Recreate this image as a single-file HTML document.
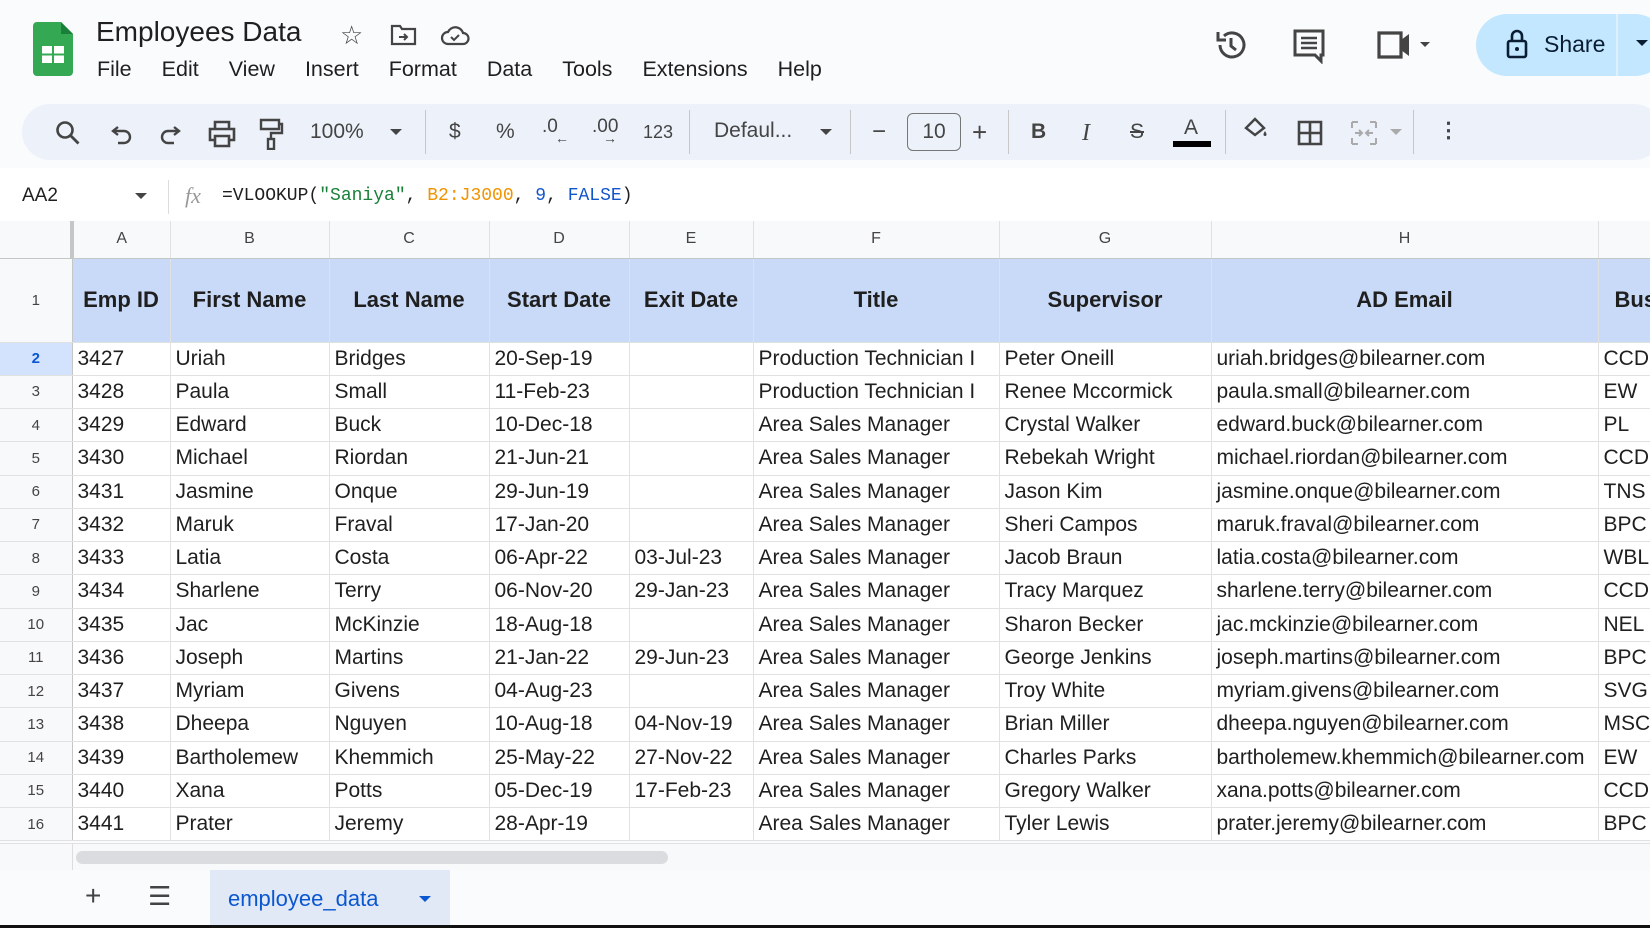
<!DOCTYPE html>
<html><head><meta charset="utf-8"><style>
*{box-sizing:border-box;margin:0;padding:0}
body{width:1650px;height:928px;overflow:hidden;background:#f9fbfd;font-family:"Liberation Sans",Arial,sans-serif;color:#1f1f1f;position:relative}
.abs{position:absolute}
.menu span{margin-right:30px}
.tb{position:absolute;top:104px;left:22px;width:1640px;height:56px;background:#edf2fa;border-radius:28px}
table{border-collapse:collapse;position:absolute;left:0;top:221px;table-layout:fixed;background:#fff;width:1700px}
td{border-right:1px solid #e1e1e1;border-bottom:1px solid #e1e1e1;font-size:21px;white-space:nowrap;overflow:hidden;padding-left:5px;height:33.25px}
td.rn{background:#f8f9fa;color:#444;font-size:15px;text-align:center;padding:0;border-right:1px solid #c4c7c5}
tr.ch td{background:#f8f9fa;color:#444;font-size:16px;text-align:center;height:37px;padding:0;border-bottom:1px solid #c4c7c5}
tr.h td{background:#c9daf8;font-weight:bold;text-align:center;height:84px;font-size:22px;padding:0}
tr.h td.rn{background:#f8f9fa;font-weight:normal;font-size:15px}
</style></head><body>
<svg class="abs" style="left:33px;top:22px" width="40" height="54" viewBox="0 0 40 54"><path d="M4 0h24l12 12v38a4 4 0 0 1-4 4H4a4 4 0 0 1-4-4V4a4 4 0 0 1 4-4z" fill="#34a853"/><path d="M28 0v12h12z" fill="#188038"/><rect x="9" y="24" width="22" height="17" fill="#fff"/><rect x="19" y="24" width="2" height="17" fill="#34a853"/><rect x="9" y="31.5" width="22" height="2" fill="#34a853"/></svg>
<div class="abs" style="left:96px;top:16px;font-size:28px">Employees Data</div>
<div class="abs" style="left:340px;top:20px;font-size:26px;color:#444">☆</div>
<svg class="abs" style="left:390px;top:24px" width="27" height="22" viewBox="0 0 27 22"><path d="M2 2h8l2 3h13v15H2z" fill="none" stroke="#444" stroke-width="2.2"/><path d="M9 13h8m-3-3 3 3-3 3" stroke="#444" stroke-width="2" fill="none"/></svg>
<svg class="abs" style="left:440px;top:24px" width="30" height="22" viewBox="0 0 30 22"><path d="M8 20a6 6 0 0 1 0-12 8 8 0 0 1 15 1 5.5 5.5 0 0 1 0 11z" fill="none" stroke="#444" stroke-width="2.2"/><path d="M11 13l3 3 5-5" stroke="#444" stroke-width="2" fill="none"/></svg>
<div class="abs menu" style="left:97px;top:57px;font-size:21.5px"><span>File</span><span>Edit</span><span>View</span><span>Insert</span><span>Format</span><span>Data</span><span>Tools</span><span>Extensions</span><span>Help</span></div>
<svg class="abs" style="left:1214px;top:28px" width="34" height="34" viewBox="0 0 34 34"><path d="M6 17a12 12 0 1 0 4-9" fill="none" stroke="#444" stroke-width="3"/><path d="M4 4v8h8" fill="none" stroke="#444" stroke-width="3"/><path d="M17 10v8l5 4" fill="none" stroke="#444" stroke-width="3"/></svg>
<svg class="abs" style="left:1292px;top:28px" width="34" height="36" viewBox="0 0 34 36"><path d="M3 3h28v24h-2v6l-6-6H3z" fill="none" stroke="#444" stroke-width="3"/><path d="M9 10h16M9 15h16M9 20h16" stroke="#444" stroke-width="2.5"/></svg>
<svg class="abs" style="left:1376px;top:30px" width="56" height="30" viewBox="0 0 56 30"><path d="M3 3h22v24H3z" fill="none" stroke="#444" stroke-width="3.2"/><path d="M25 10l8-6v22l-8-6z" fill="#444"/><path d="M44 12h10l-5 5z" fill="#444"/></svg>
<div class="abs" style="left:1476px;top:14px;width:190px;height:62px;background:#c2e7ff;border-radius:31px"></div>
<div class="abs" style="left:1616px;top:14px;width:2px;height:62px;background:#e0f0fb"></div>
<svg class="abs" style="left:1505px;top:28px" width="24" height="32" viewBox="0 0 24 32"><rect x="3" y="13" width="18" height="16" rx="2" fill="none" stroke="#0b1d33" stroke-width="2.6"/><path d="M7 13V8a5 5 0 0 1 10 0v5" fill="none" stroke="#0b1d33" stroke-width="2.6"/><circle cx="12" cy="21" r="2" fill="#0b1d33"/></svg>
<div class="abs" style="left:1544px;top:31px;font-size:23px;color:#0b1d33">Share</div>
<div class="abs" style="left:1636px;top:40px;border:6px solid transparent;border-top-color:#0b1d33"></div>
<div class="tb"></div>
<div class="abs" style="left:0;top:118px;width:1650px;height:30px;font-size:21px;color:#444">
<svg class="abs" style="left:55px;top:2px" width="26" height="26" viewBox="0 0 26 26"><circle cx="10" cy="10" r="7.5" fill="none" stroke="#444" stroke-width="2.6"/><path d="M15.5 15.5l8 8" stroke="#444" stroke-width="2.8"/></svg>
<svg class="abs" style="left:110px;top:4px" width="24" height="24" viewBox="0 0 24 24"><path d="M8 5L3 9l5 4" fill="none" stroke="#444" stroke-width="2.4"/><path d="M3 9h11a6 6 0 0 1 0 12H8" fill="none" stroke="#444" stroke-width="2.4"/></svg>
<svg class="abs" style="left:158px;top:4px" width="24" height="24" viewBox="0 0 24 24"><path d="M16 5l5 4-5 4" fill="none" stroke="#444" stroke-width="2.4"/><path d="M21 9H10a6 6 0 0 0 0 12h6" fill="none" stroke="#444" stroke-width="2.4"/></svg>
<svg class="abs" style="left:208px;top:2px" width="28" height="28" viewBox="0 0 28 28"><path d="M7 9V2h14v7M7 20H2V9h24v11h-5" fill="none" stroke="#444" stroke-width="2.6"/><path d="M7 16h14v10H7z" fill="none" stroke="#444" stroke-width="2.6"/></svg>
<svg class="abs" style="left:258px;top:0" width="26" height="32" viewBox="0 0 26 32"><path d="M3 2h18v9H3zM21 6h3v9H13v6" fill="none" stroke="#444" stroke-width="2.4"/><rect x="10" y="21" width="6" height="10" fill="none" stroke="#444" stroke-width="2.4"/></svg>
<span class="abs" style="left:310px;top:2px">100%</span>
<div class="abs" style="left:390px;top:11px;border:6px solid transparent;border-top-color:#444"></div>
<div class="abs" style="left:425px;top:-8px;width:1px;height:44px;background:#c7c7c7"></div>
<span class="abs" style="left:449px;top:2px">$</span>
<span class="abs" style="left:496px;top:2px">%</span>
<span class="abs" style="left:542px;top:-2px;font-size:19px">.0</span><span class="abs" style="left:555px;top:12px;font-size:14px">←</span>
<span class="abs" style="left:592px;top:-2px;font-size:19px">.00</span><span class="abs" style="left:603px;top:12px;font-size:14px">→</span>
<span class="abs" style="left:643px;top:4px;font-size:18px">123</span>
<div class="abs" style="left:689px;top:-8px;width:1px;height:44px;background:#c7c7c7"></div>
<span class="abs" style="left:714px;top:1px">Defaul...</span>
<div class="abs" style="left:820px;top:11px;border:6px solid transparent;border-top-color:#444"></div>
<div class="abs" style="left:850px;top:-8px;width:1px;height:44px;background:#c7c7c7"></div>
<span class="abs" style="left:872px;top:0;font-size:24px">−</span>
<div class="abs" style="left:907px;top:-5px;width:54px;height:38px;border:1.5px solid #747775;border-radius:6px;text-align:center;line-height:35px">10</div>
<span class="abs" style="left:972px;top:-1px;font-size:26px">+</span>
<div class="abs" style="left:1008px;top:-8px;width:1px;height:44px;background:#c7c7c7"></div>
<span class="abs" style="left:1031px;top:2px;font-weight:bold">B</span>
<span class="abs" style="left:1082px;top:2px;font-style:italic;font-family:'Liberation Serif',serif;font-size:24px">I</span>
<span class="abs" style="left:1130px;top:2px;text-decoration:line-through">S</span>
<span class="abs" style="left:1184px;top:-2px">A</span>
<div class="abs" style="left:1173px;top:23px;width:38px;height:6px;background:#000"></div>
<div class="abs" style="left:1225px;top:-8px;width:1px;height:44px;background:#c7c7c7"></div>
<svg class="abs" style="left:1242px;top:-4px" width="28" height="28" viewBox="0 0 28 28"><path d="M4 14l9-9 9 9-9 7z" fill="none" stroke="#444" stroke-width="2.4"/><path d="M23 17c2 3 2 5 0 5s-2-2 0-5z" fill="#444"/></svg>
<svg class="abs" style="left:1297px;top:2px" width="26" height="26" viewBox="0 0 26 26"><path d="M2 2h22v22H2zM13 2v22M2 13h22" fill="none" stroke="#444" stroke-width="2.6"/></svg>
<svg class="abs" style="left:1350px;top:2px" width="28" height="26" viewBox="0 0 28 26"><path d="M2 2h6M2 2v6M26 2h-6M26 2v6M2 24h6M2 24v-6M26 24h-6M26 24v-6M5 13h7m-3-3 3 3-3 3M23 13h-7m3-3-3 3 3 3" fill="none" stroke="#aaa" stroke-width="2"/></svg>
<div class="abs" style="left:1390px;top:11px;border:6px solid transparent;border-top-color:#aaa"></div>
<div class="abs" style="left:1413px;top:-8px;width:1px;height:44px;background:#c7c7c7"></div>
<span class="abs" style="left:1438px;top:0;font-weight:bold">⋮</span>
</div>
<div class="abs" style="left:0;top:168px;width:1650px;height:53px;background:#fff"></div>
<div class="abs" style="left:22px;top:185px;font-size:19px">AA2</div>
<div class="abs" style="left:135px;top:193px;border:6px solid transparent;border-top-color:#444"></div>
<div class="abs" style="left:168px;top:180px;width:1px;height:34px;background:#ddd"></div>
<div class="abs" style="left:185px;top:183px;font-size:22px;font-style:italic;font-family:'Liberation Serif',serif;color:#999">fx</div>
<div class="abs" style="left:222px;top:186px;font-family:'Liberation Mono',monospace;font-size:18px">=VLOOKUP(<span style="color:#188038">"Saniya"</span>, <span style="color:#f09300">B2:J3000</span>, <span style="color:#1155cc">9</span>, <span style="color:#1155cc">FALSE</span>)</div>
<table>
<colgroup><col style="width:72px"><col style="width:98px"><col style="width:159px"><col style="width:160px"><col style="width:140px"><col style="width:124px"><col style="width:246px"><col style="width:212px"><col style="width:387px"><col style="width:102px"></colgroup>
<tr class="ch"><td class="rn" style="border-right:4px solid #c4c7c5"></td><td>A</td><td>B</td><td>C</td><td>D</td><td>E</td><td>F</td><td>G</td><td>H</td><td></td></tr>
<tr class="h"><td class="rn">1</td><td>Emp ID</td><td>First Name</td><td>Last Name</td><td>Start Date</td><td>Exit Date</td><td>Title</td><td>Supervisor</td><td>AD Email</td><td style="text-align:left;padding-left:16px">Bus</td></tr>
<tr><td class="rn" style="background:#d3e3fd;color:#0b57d0;font-weight:bold">2</td><td>3427</td><td>Uriah</td><td>Bridges</td><td>20-Sep-19</td><td></td><td>Production Technician I</td><td>Peter Oneill</td><td>uriah.bridges@bilearner.com</td><td>CCDR</td></tr>
<tr><td class="rn">3</td><td>3428</td><td>Paula</td><td>Small</td><td>11-Feb-23</td><td></td><td>Production Technician I</td><td>Renee Mccormick</td><td>paula.small@bilearner.com</td><td>EW</td></tr>
<tr><td class="rn">4</td><td>3429</td><td>Edward</td><td>Buck</td><td>10-Dec-18</td><td></td><td>Area Sales Manager</td><td>Crystal Walker</td><td>edward.buck@bilearner.com</td><td>PL</td></tr>
<tr><td class="rn">5</td><td>3430</td><td>Michael</td><td>Riordan</td><td>21-Jun-21</td><td></td><td>Area Sales Manager</td><td>Rebekah Wright</td><td>michael.riordan@bilearner.com</td><td>CCDR</td></tr>
<tr><td class="rn">6</td><td>3431</td><td>Jasmine</td><td>Onque</td><td>29-Jun-19</td><td></td><td>Area Sales Manager</td><td>Jason Kim</td><td>jasmine.onque@bilearner.com</td><td>TNS</td></tr>
<tr><td class="rn">7</td><td>3432</td><td>Maruk</td><td>Fraval</td><td>17-Jan-20</td><td></td><td>Area Sales Manager</td><td>Sheri Campos</td><td>maruk.fraval@bilearner.com</td><td>BPC</td></tr>
<tr><td class="rn">8</td><td>3433</td><td>Latia</td><td>Costa</td><td>06-Apr-22</td><td>03-Jul-23</td><td>Area Sales Manager</td><td>Jacob Braun</td><td>latia.costa@bilearner.com</td><td>WBL</td></tr>
<tr><td class="rn">9</td><td>3434</td><td>Sharlene</td><td>Terry</td><td>06-Nov-20</td><td>29-Jan-23</td><td>Area Sales Manager</td><td>Tracy Marquez</td><td>sharlene.terry@bilearner.com</td><td>CCDR</td></tr>
<tr><td class="rn">10</td><td>3435</td><td>Jac</td><td>McKinzie</td><td>18-Aug-18</td><td></td><td>Area Sales Manager</td><td>Sharon Becker</td><td>jac.mckinzie@bilearner.com</td><td>NEL</td></tr>
<tr><td class="rn">11</td><td>3436</td><td>Joseph</td><td>Martins</td><td>21-Jan-22</td><td>29-Jun-23</td><td>Area Sales Manager</td><td>George Jenkins</td><td>joseph.martins@bilearner.com</td><td>BPC</td></tr>
<tr><td class="rn">12</td><td>3437</td><td>Myriam</td><td>Givens</td><td>04-Aug-23</td><td></td><td>Area Sales Manager</td><td>Troy White</td><td>myriam.givens@bilearner.com</td><td>SVG</td></tr>
<tr><td class="rn">13</td><td>3438</td><td>Dheepa</td><td>Nguyen</td><td>10-Aug-18</td><td>04-Nov-19</td><td>Area Sales Manager</td><td>Brian Miller</td><td>dheepa.nguyen@bilearner.com</td><td>MSC</td></tr>
<tr><td class="rn">14</td><td>3439</td><td>Bartholemew</td><td>Khemmich</td><td>25-May-22</td><td>27-Nov-22</td><td>Area Sales Manager</td><td>Charles Parks</td><td>bartholemew.khemmich@bilearner.com</td><td>EW</td></tr>
<tr><td class="rn">15</td><td>3440</td><td>Xana</td><td>Potts</td><td>05-Dec-19</td><td>17-Feb-23</td><td>Area Sales Manager</td><td>Gregory Walker</td><td>xana.potts@bilearner.com</td><td>CCDR</td></tr>
<tr><td class="rn">16</td><td>3441</td><td>Prater</td><td>Jeremy</td><td>28-Apr-19</td><td></td><td>Area Sales Manager</td><td>Tyler Lewis</td><td>prater.jeremy@bilearner.com</td><td>BPC</td></tr>
</table>
<div class="abs" style="left:0;top:843px;width:1650px;height:27px;background:#f8f9fa;border-top:1px solid #e1e1e1"></div>
<div class="abs" style="left:72px;top:843px;width:1px;height:27px;background:#ddd"></div>
<div class="abs" style="left:76px;top:851px;width:592px;height:13px;background:#dadce0;border-radius:7px"></div>
<div class="abs" style="left:0;top:870px;width:1650px;height:55px;background:#f9fbfd"></div>
<div class="abs" style="left:85px;top:880px;font-size:28px;color:#444">+</div>
<div class="abs" style="left:148px;top:881px;font-size:26px;color:#444">☰</div>
<div class="abs" style="left:210px;top:870px;width:240px;height:55px;background:#e1e9f7"></div>
<div class="abs" style="left:228px;top:886px;font-size:22px;color:#0b57d0">employee_data</div>
<div class="abs" style="left:419px;top:896px;border:6px solid transparent;border-top-color:#0b57d0"></div>
<div class="abs" style="left:0;top:925px;width:1650px;height:3px;background:#111"></div>
</body></html>
